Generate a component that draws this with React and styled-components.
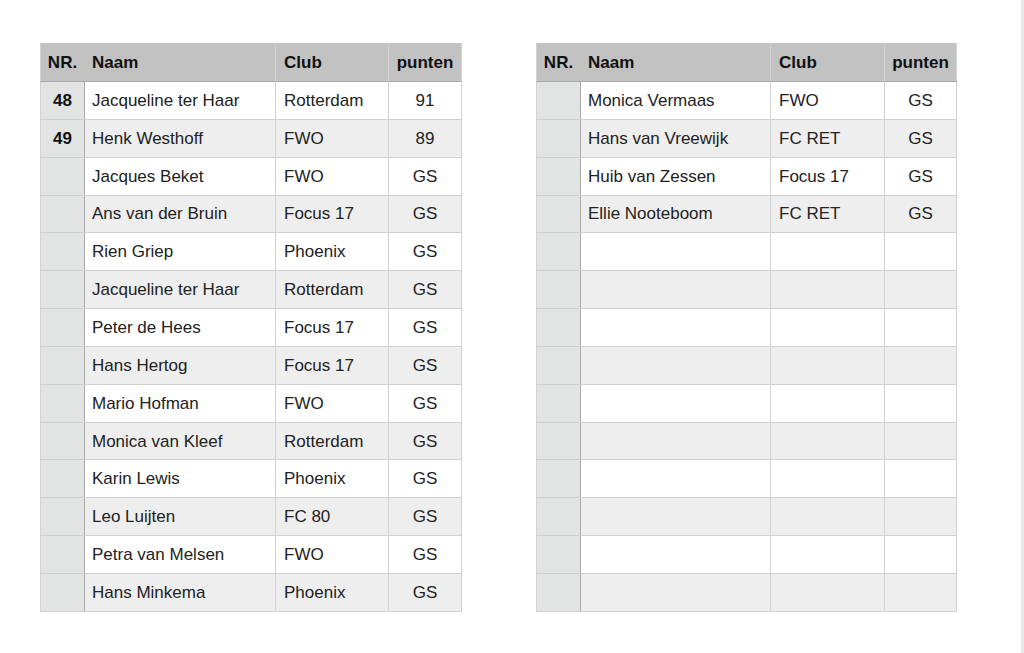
import React from "react";
import styled, { createGlobalStyle } from "styled-components";

const Global = createGlobalStyle`
  html, body { margin: 0; padding: 0; background: #ffffff; }
  body { font-family: "Liberation Sans", Arial, Helvetica, sans-serif; }
`;

const Page = styled.div`
  width: 1024px;
  height: 653px;
  box-sizing: border-box;
  padding: 43px 0 0 40px;
  display: flex;
  align-items: flex-start;
  gap: 74px;
  background: #fff;
  border-right: 3px solid #e9e9e9;
`;

const Sheet = styled.div`
  display: flex;
  flex-direction: column;
  width: ${(p) => p.$w}px;
`;

const Row = styled.div`
  display: grid;
  grid-template-columns: ${(p) => p.$cols};
  height: ${(p) => (p.$head ? "39px" : "37.857px")};
  flex: none;
  box-sizing: border-box;
  border-bottom: 1px solid ${(p) => (p.$head ? "#a9aaa9" : "#d0d0d0")};
  background: ${(p) => (p.$head ? "#c1c2c1" : p.$alt ? "#eeeeee" : "#ffffff")};
`;

const Cell = styled.div`
  display: flex;
  align-items: center;
  justify-content: ${(p) => (p.$center ? "center" : "flex-start")};
  padding: 1px ${(p) => (p.$center ? 0 : 7)}px 0 ${(p) => (p.$center ? 0 : p.$pl || 7)}px;
  box-sizing: border-box;
  font-size: 17px;
  font-weight: ${(p) => (p.$bold ? 700 : 400)};
  color: ${(p) => (p.$bold ? "#111" : "#222")};
  white-space: nowrap;
  overflow: hidden;
  border-right: 1px solid #d2d2d2;
`;

const NrCell = styled(Cell)`
  justify-content: center;
  background: ${(p) => (p.$head ? "transparent" : "#e2e3e3")};
  border-right: 1px solid ${(p) => (p.$head ? "#c1c2c1" : "#a9aaa9")};
  border-left: 1px solid #d2d2d2;
  font-weight: 700;
  color: #111;
  padding: 1px 0 0 0;
`;

const left = [
  ["48", "Jacqueline ter Haar", "Rotterdam", "91"],
  ["49", "Henk Westhoff", "FWO", "89"],
  ["", "Jacques Beket", "FWO", "GS"],
  ["", "Ans van der Bruin", "Focus 17", "GS"],
  ["", "Rien Griep", "Phoenix", "GS"],
  ["", "Jacqueline ter Haar", "Rotterdam", "GS"],
  ["", "Peter de Hees", "Focus 17", "GS"],
  ["", "Hans Hertog", "Focus 17", "GS"],
  ["", "Mario Hofman", "FWO", "GS"],
  ["", "Monica van Kleef", "Rotterdam", "GS"],
  ["", "Karin Lewis", "Phoenix", "GS"],
  ["", "Leo Luijten", "FC 80", "GS"],
  ["", "Petra van Melsen", "FWO", "GS"],
  ["", "Hans Minkema", "Phoenix", "GS"],
];

const rightData = [
  ["", "Monica Vermaas", "FWO", "GS"],
  ["", "Hans van Vreewijk", "FC RET", "GS"],
  ["", "Huib van Zessen", "Focus 17", "GS"],
  ["", "Ellie Nooteboom", "FC RET", "GS"],
];
const right = [...rightData];
while (right.length < 14) right.push(["", "", "", ""]);

function Table({ rows, cols, width }) {
  return (
    <Sheet $w={width}>
      <Row $head $cols={cols}>
        <NrCell $head>NR.</NrCell>
        <Cell $bold>Naam</Cell>
        <Cell $bold $pl={8}>Club</Cell>
        <Cell $bold $center>punten</Cell>
      </Row>
      {rows.map((r, i) => (
        <Row key={i} $alt={i % 2 === 1} $cols={cols}>
          <NrCell>{r[0]}</NrCell>
          <Cell>{r[1]}</Cell>
          <Cell $pl={8}>{r[2]}</Cell>
          <Cell $center>{r[3]}</Cell>
        </Row>
      ))}
    </Sheet>
  );
}

export default function App() {
  return (
    <>
      <Global />
      <Page>
        <Table rows={left} cols="45px 191px 113px 73px" width={422} />
        <Table rows={right} cols="45px 190px 114px 72px" width={421} />
      </Page>
    </>
  );
}
